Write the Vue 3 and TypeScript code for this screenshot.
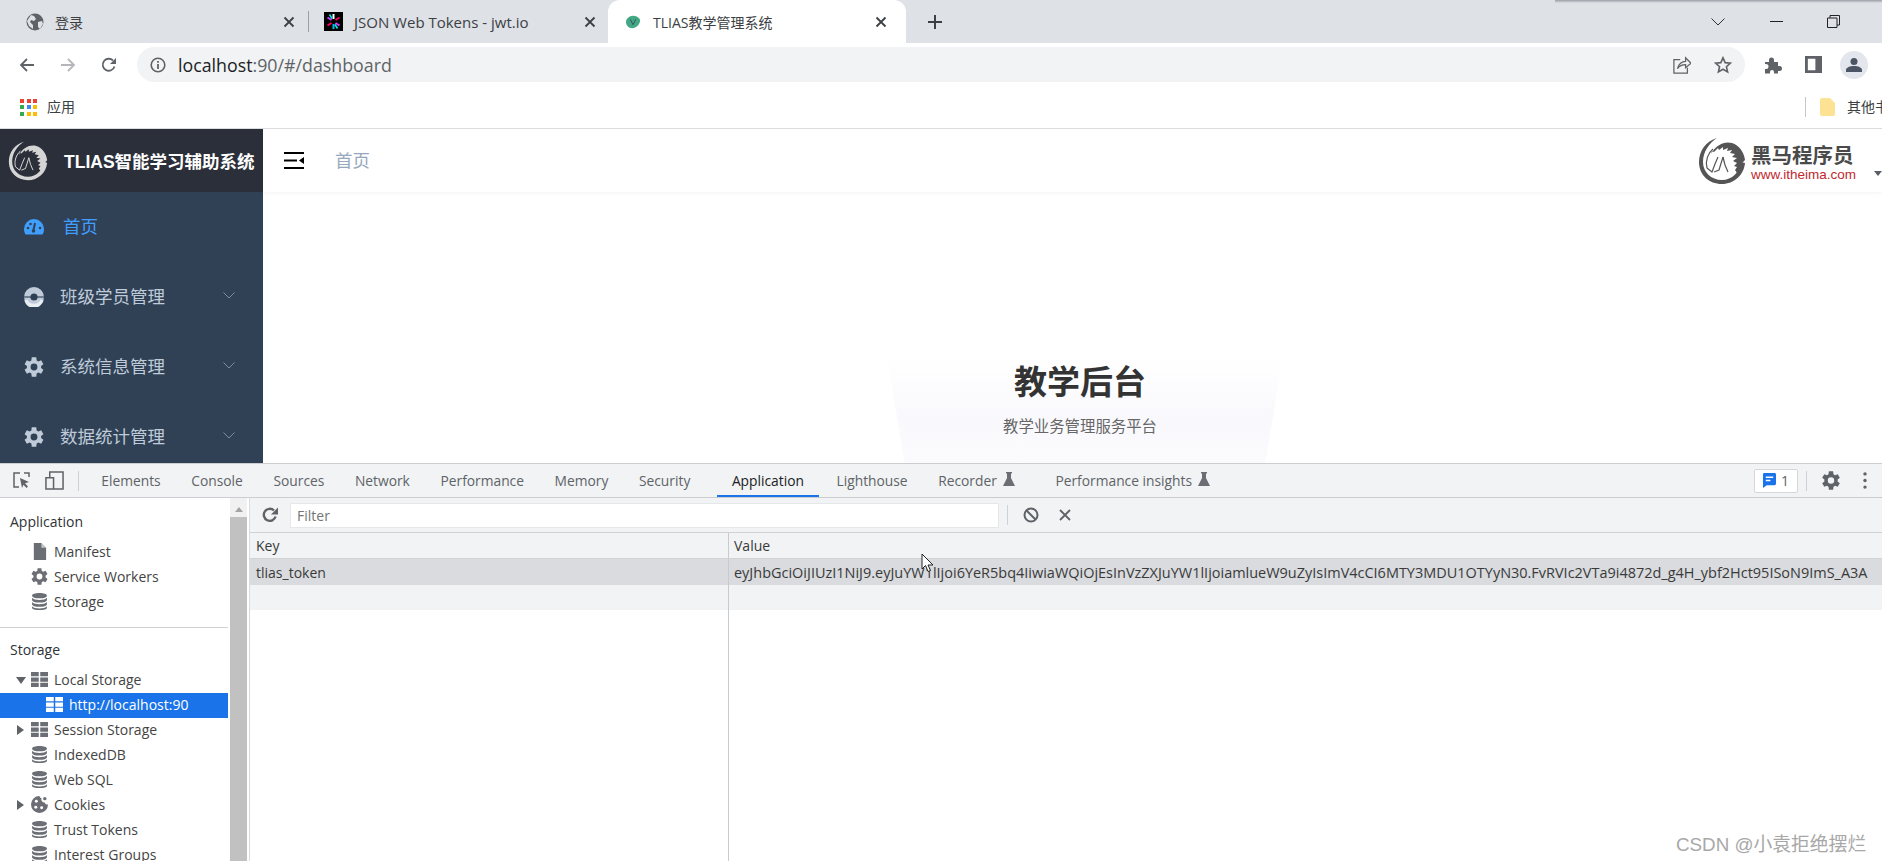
<template>
  <div class="screen">
    <svg class="sprites" aria-hidden="true">
      <symbol id="horse" viewBox="0 0 48 48">
        <path d="M19 1C8 4 1 14 1 25c0 13 10 22 23 22 12 0 22-9 23-21l-4-1c-1 10-9 18-19 18C13 43 5 35 5 25 5 15 11 6 19 1z" fill="currentColor" />
        <path d="M13 17C18 8 26 4 34 6c7 2 12 9 13 17l-3 3-1 6-4 4-2-3 2-3-3-1 3-3-4-2 4-3-5-1 3-3-5-1 2-3-5 1 1-3-5 2v-3l-4 3-1-2-4 4-2-1z" fill="currentColor" />
        <path d="M9 31c-2-7 1-15 6-19M9 31l5 4 3-8 3-7M25 20l-4 13-5 2M25 20l2 8 3 7" fill="none" stroke="currentColor" stroke-width="1.2" />
      </symbol>
      <symbol id="db" viewBox="0 0 16 16">
        <path d="M8 0c4 0 7 1 7 2.500S12 5 8 5 1 4 1 2.500 4 0 8 0zM1 4.500C2 6 5 6.500 8 6.500s6-.5 7-2v2C15 8 12 9 8 9S1 8 1 6.500zM1 8.500C2 10 5 10.500 8 10.500s6-.5 7-2v2c0 1.500-3 2.500-7 2.500s-7-1-7-2.500zM1 12.500c1 1.500 4 2 7 2s6-.5 7-2V14c0 1-3 2-7 2s-7-1-7-2z" fill="currentColor" />
      </symbol>
      <symbol id="grid" viewBox="0 0 16 14">
        <path d="M0 0h7.300v4H0zM8.700 0H16v4H8.700zM0 5h7.300v4H0zM8.700 5H16v4H8.700zM0 10h7.300v4H0zM8.700 10H16v4H8.700z" fill="currentColor" />
      </symbol>
      <symbol id="gear" viewBox="2.400 1.800 19.600 20.400">
        <path d="M19.400 13a7.500 7.500 0 0 0 0-2l2.400-1.900-2.300-4-2.900 1.200a7.500 7.500 0 0 0-1.700-1L14.500 2h-4.600l-.4 3.300a7.500 7.500 0 0 0-1.700 1L4.900 5.100l-2.300 4L5 11a7.500 7.500 0 0 0 0 2l-2.400 1.900 2.300 4 2.900-1.200c.5.400 1.100.7 1.700 1l.4 3.300h4.600l.4-3.300c.6-.3 1.200-.6 1.700-1l2.900 1.200 2.300-4zM12.200 15.500a3.500 3.500 0 1 1 0-7 3.500 3.500 0 0 1 0 7z" fill="currentColor" />
      </symbol>
      <symbol id="flask" viewBox="0 0 12 14">
        <path d="M3 0h6v1.500H8V6l4 8H0l4-8V1.500H3z" fill="currentColor" />
      </symbol>
    </svg>

    <div class="window-shadow"></div>

    <div class="tabstrip">
      <div v-for="tab in browserTabs" :key="tab.title" :class="['tab', `tab--${tab.id}`]">
        <svg v-if="tab.id === 'login'" class="tab__icon" viewBox="0 0 18 18">
          <circle cx="9" cy="9" r="8.500" fill="#5f6368" />
          <path d="M5 2l3 1 2 3-2 2-3-1-1 2 3 3v4l-4-3-2-5zM12 9l4-1 1 3-3 5-2-2z" fill="#dee1e6" />
        </svg>
        <svg v-else-if="tab.id === 'jwt'" class="tab__icon tab__icon--jwt" viewBox="0 0 19 19">
          <rect width="19" height="19" fill="#000" />
          <path d="M9.500 2v5" stroke="#fff" stroke-width="2" />
          <path d="M9.500 12v5" stroke="#00b9f1" stroke-width="2" />
          <path d="M3.500 5.500l4 2.500M11.500 11l4 2.500" stroke="#d63aff" stroke-width="2" />
          <path d="M15.500 5.500l-4 2.500M7.500 11l-4 2.500" stroke="#fb015b" stroke-width="2" />
          <path d="M5.500 2.500l2.500 4M11 12.500l2.500 4" stroke="#00f2e6" stroke-width="1.500" />
        </svg>
        <svg v-else class="tab__icon tab__icon--vue" viewBox="0 0 20 18">
          <path d="M10 1c6 0 10 4 9 7.500C18 13 14 17 9 17 4 17 1 13 1 9s4-8 9-8z" fill="#42a884" />
          <path d="M6.500 5.500L10 12.500l3.500-7" fill="none" stroke="#35495e" stroke-width="1.100" />
        </svg>
        <span class="tab__title">{{ tab.title }}</span>
        <svg class="tab__close" viewBox="0 0 12 12"><path d="M1.500 1.500l9 9M10.500 1.500l-9 9" stroke="#3c4043" stroke-width="1.800" /></svg>
      </div>
      <svg class="tab-add" viewBox="0 0 16 16"><path d="M8 1v14M1 8h14" stroke="#3c4043" stroke-width="2" /></svg>
      <div class="window-ctrls">
        <svg class="win-chevron" viewBox="0 0 14 8"><path d="M.5.500L7 7 13.500.500" fill="none" stroke="#333" /></svg>
        <span class="win-min"></span>
        <svg class="win-restore" viewBox="0 0 13 13"><path d="M.5 3h9.500v9.500H.5zM3 3V.5h9.500V10H10" fill="none" stroke="#222" /></svg>
      </div>
    </div>

    <div class="toolbar">
      <svg class="nav-icon" viewBox="0 0 16 16"><path d="M15 8H2M8 2L2 8l6 6" fill="none" stroke="#5f6368" stroke-width="1.800" /></svg>
      <svg class="nav-icon nav-icon--off" viewBox="0 0 16 16"><path d="M1 8h13M8 2l6 6-6 6" fill="none" stroke="#b4b6b9" stroke-width="1.800" /></svg>
      <svg class="nav-icon" viewBox="0 0 16 16"><path d="M13.500 9.500A6 6 0 1 1 12 3.500" fill="none" stroke="#5f6368" stroke-width="1.800" /><path d="M15 1v6H9z" fill="#5f6368" /></svg>
      <div class="omnibox">
        <svg class="omnibox__info" viewBox="0 0 16 16">
          <circle cx="8" cy="8" r="6.800" fill="none" stroke="#5f6368" stroke-width="1.600" />
          <path d="M8 7v5M8 4v1.800" stroke="#5f6368" stroke-width="1.800" />
        </svg>
        <span class="omnibox__url"><b>localhost</b>:90/#/dashboard</span>
        <svg class="omnibox__share" viewBox="0 0 20 20"><path d="M8 4H1v15h15v-6M5 14c1-5 5-8 9-8V2l6 6-6 5V9.500c-4 0-7 1.500-9 4.500z" fill="none" stroke="#5f6368" stroke-width="1.400" /></svg>
        <svg class="omnibox__star" viewBox="0 0 20 20"><path d="M10 2l2.400 5.400 5.800.6-4.400 3.900 1.300 5.800-5.100-3-5.100 3 1.300-5.800L1.800 8l5.800-.6z" fill="none" stroke="#5f6368" stroke-width="1.800" /></svg>
      </div>
      <svg class="ext-icon" viewBox="0 0 18 18"><path d="M1 6h4V4a2.500 2.500 0 0 1 5 0v2h4v4h1.500a2.500 2.500 0 0 1 0 5H14v2.500H10V16a2 2 0 0 0-4 0v1.500H1V13h1a2.500 2.500 0 0 0 0-5H1z" fill="#5f6368" /></svg>
      <svg class="panel-icon" viewBox="0 0 18 18"><path d="M0 0h18v18H0zM3 3v12h8V3z" fill="#5f6368" fill-rule="evenodd" /></svg>
      <div class="avatar">
        <svg viewBox="0 0 16 16"><circle cx="8" cy="4.500" r="3.500" fill="#4b5563" /><path d="M0 15v-2c0-2.500 4-4 8-4s8 1.500 8 4v2z" fill="#4b5563" /></svg>
      </div>
    </div>

    <div class="bookmarks">
      <div class="apps-grid">
        <i v-for="(color, i) in appColors" :key="i" :style="{ background: color }"></i>
      </div>
      <span class="bookmarks__label">应用</span>
      <span class="bookmarks__sep"></span>
      <svg class="bookmarks__folder" viewBox="0 0 15 18"><path d="M2 0h8l5 5v11a2 2 0 0 1-2 2H2a2 2 0 0 1-2-2V2a2 2 0 0 1 2-2z" fill="#fde293" /></svg>
      <span class="bookmarks__label bookmarks__label--other">其他书签</span>
    </div>

    <div class="page">
      <aside class="side">
        <div class="side__brand">
          <svg class="side__logo"><use href="#horse" /></svg>
          <span class="side__title">TLIAS智能学习辅助系统</span>
        </div>
        <div v-for="item in menu" :key="item.label" :class="['menu-item', { 'menu-item--active': item.active }]">
          <svg v-if="item.icon === 'dash'" class="menu-item__icon" viewBox="0 0 20 16">
            <path d="M10 0a10 10 0 0 1 10 10c0 2-.5 4-1.500 5.500h-17A10 10 0 0 1 0 10 10 10 0 0 1 10 0z" fill="currentColor" />
            <path d="M11 4l-1.500 7" stroke="#304156" stroke-width="2" />
            <circle cx="4" cy="9" r="1.300" fill="#304156" /><circle cx="6.500" cy="5" r="1.300" fill="#304156" /><circle cx="16" cy="9" r="1.300" fill="#304156" /><circle cx="9.500" cy="12" r="1.800" fill="#304156" />
          </svg>
          <svg v-else-if="item.icon === 'ring'" class="menu-item__icon" viewBox="0 0 20 20">
            <circle cx="10" cy="10" r="6.800" fill="none" stroke="currentColor" stroke-width="6.400" />
            <path d="M3.400 12.500a7.200 7.200 0 0 0 13.200 0l3 1.100a10 10 0 0 1-19.200 0z" fill="#e8edf3" />
            <path d="M0 10h20" stroke="#304156" stroke-width="1.100" />
          </svg>
          <svg v-else class="menu-item__icon"><use href="#gear" /></svg>
          <span class="menu-item__label">{{ item.label }}</span>
          <svg v-if="item.icon !== 'dash'" class="menu-item__arrow" viewBox="0 0 12 7"><path d="M.5.500L6 6 11.500.500" fill="none" stroke="currentColor" /></svg>
        </div>
      </aside>

      <main class="content">
        <header class="navbar">
          <svg class="navbar__toggle" viewBox="0 0 20 17">
            <path d="M0 0h20v2H0zM0 7.500h13v2H0zM0 15h20v2H0z" fill="#000" />
            <path d="M20 5v7l-5-3.500z" fill="#000" />
          </svg>
          <span class="navbar__crumb">首页</span>
          <div class="brand">
            <svg class="brand__logo"><use href="#horse" /></svg>
            <div class="brand__text">
              <span class="brand__name">黑马程序员</span>
              <span class="brand__site">www.itheima.com</span>
            </div>
          </div>
          <span class="navbar__caret"></span>
        </header>
        <section class="hero">
          <div class="hero__backdrop"></div>
          <h1 class="hero__title">教学后台</h1>
          <p class="hero__sub">教学业务管理服务平台</p>
        </section>
      </main>
    </div>

    <div class="devtools">
      <div class="dt-tabs">
        <svg class="dt-tool" viewBox="0 0 17 17">
          <path d="M7 1H1v14h5M11 1h5v4" fill="none" stroke="#5f6368" stroke-width="1.500" />
          <path d="M7 6l9 4-4 1.200 3 3.300-1.500 1.500-3-3.300L9 16z" fill="#5f6368" />
        </svg>
        <svg class="dt-tool dt-tool--device" viewBox="0 0 20 20">
          <path d="M5 7V1h14v18H1V7h8v12" fill="none" stroke="#5f6368" stroke-width="1.600" />
        </svg>
        <span class="dt-tabs__sep"></span>
        <div
          v-for="tab in devTabs"
          :key="tab.label"
          :class="['dt-tab', { 'dt-tab--active': tab.label === 'Application' }]"
        >
          {{ tab.label }}
          <svg v-if="tab.flask" class="dt-tab__flask"><use href="#flask" /></svg>
        </div>
        <div class="dt-tabs__right">
          <div class="issues">
            <svg viewBox="0 0 14 16">
              <path d="M1.500 0h11A1.500 1.500 0 0 1 14 1.500v10a1.500 1.500 0 0 1-1.500 1.500H4l-4 3V1.500A1.500 1.500 0 0 1 1.500 0z" fill="#1a73e8" />
              <path d="M3 4.500h8M3 8h5" stroke="#fff" stroke-width="1.400" />
            </svg>
            <span>1</span>
          </div>
          <span class="dt-tabs__sep dt-tabs__sep--issues"></span>
          <svg class="dt-gear"><use href="#gear" /></svg>
          <svg class="dt-more" viewBox="0 0 4 18"><circle cx="2" cy="2" r="1.800" fill="#5f6368" /><circle cx="2" cy="9" r="1.800" fill="#5f6368" /><circle cx="2" cy="16" r="1.800" fill="#5f6368" /></svg>
        </div>
      </div>

      <div class="dt-body">
        <nav class="tree">
          <div class="tree__heading tree__heading--first">Application</div>
          <div v-for="node in appNodes" :key="node.label" class="tree__row">
            <svg v-if="node.icon === 'file'" class="tree__icon" viewBox="0 0 16 18"><path d="M2 0h8l5 5v13H2z" fill="#6b6f75" /><path d="M10 0v5h5" fill="#fff" opacity=".6" /></svg>
            <svg v-else class="tree__icon"><use :href="`#${node.icon}`" /></svg>
            {{ node.label }}
          </div>
          <div class="tree__divider"></div>
          <div class="tree__heading">Storage</div>
          <div
            v-for="node in storageNodes"
            :key="node.label"
            :class="['tree__row', { 'tree__row--child': node.child, 'tree__row--selected': node.selected }]"
          >
            <span v-if="node.caret" :class="['tree__caret', `tree__caret--${node.caret}`]"></span>
            <svg v-if="node.icon === 'cookie'" class="tree__icon" viewBox="0 0 16 16">
              <path d="M8 0a8 8 0 1 0 8 8c-2 0-3-1-3-2-2 0-4-2-3-4-1 0-2-1-2-2z" fill="#6b6f75" />
              <circle cx="5" cy="5" r="1.400" fill="#fff" /><circle cx="4.500" cy="10.500" r="1.400" fill="#fff" /><circle cx="10" cy="11" r="1.400" fill="#fff" />
              <circle cx="13" cy="2.500" r="1.600" fill="#6b6f75" />
            </svg>
            <svg v-else class="tree__icon"><use :href="`#${node.icon}`" /></svg>
            {{ node.label }}
          </div>
        </nav>

        <div class="scrollbar">
          <span class="scrollbar__up"></span>
          <span class="scrollbar__thumb"></span>
        </div>

        <div class="storage">
          <div class="filter">
            <svg class="filter__reload" viewBox="0 0 16 16"><path d="M13.600 9.500A6 6 0 1 1 12 3.500" fill="none" stroke="#5f6368" stroke-width="2.400" /><path d="M16 .5v7H9z" fill="#5f6368" /></svg>
            <div class="filter__input">Filter</div>
            <span class="filter__sep"></span>
            <svg class="filter__block" viewBox="0 0 16 16"><circle cx="8" cy="8" r="6.500" fill="none" stroke="#5f6368" stroke-width="2" /><path d="M3.500 3.500l9 9" stroke="#5f6368" stroke-width="2" /></svg>
            <svg class="filter__clear" viewBox="0 0 12 12"><path d="M1 1l10 10M11 1L1 11" stroke="#5f6368" stroke-width="1.800" /></svg>
          </div>
          <div class="kv">
            <div class="kv__row kv__row--head">
              <div class="kv__key">Key</div>
              <div class="kv__val">Value</div>
            </div>
            <div class="kv__row kv__row--selected">
              <div class="kv__key">tlias_token</div>
              <div class="kv__val">{{ token }}</div>
            </div>
            <div class="kv__row kv__row--blank">
              <div class="kv__key"></div>
              <div class="kv__val"></div>
            </div>
            <div class="kv__fill"></div>
          </div>
        </div>
      </div>
    </div>

    <svg class="cursor" viewBox="0 0 13 20"><path d="M1 1v15l3.500-3.500L7 18.500l2.500-1-2.500-5.500h5z" fill="#fff" stroke="#222" /></svg>
    <div class="watermark">CSDN @小袁拒绝摆烂</div>
  </div>
</template>

<script setup lang="ts">
interface DevTab {
  label: string
  flask?: boolean
}

interface TreeNode {
  label: string
  icon: string
  caret?: 'open' | 'closed'
  child?: boolean
  selected?: boolean
}

const browserTabs = [
  { id: 'login', title: '登录' },
  { id: 'jwt', title: 'JSON Web Tokens - jwt.io' },
  { id: 'tlias', title: 'TLIAS教学管理系统' }
]

const appColors = [
  '#ea4335', '#ea4335', '#ea4335',
  '#34a853', '#4285f4', '#fbbc04',
  '#34a853', '#fbbc04', '#fbbc04'
]

const menu = [
  { label: '首页', icon: 'dash', active: true },
  { label: '班级学员管理', icon: 'ring' },
  { label: '系统信息管理', icon: 'gear' },
  { label: '数据统计管理', icon: 'gear' }
]

const devTabs: DevTab[] = [
  { label: 'Elements' },
  { label: 'Console' },
  { label: 'Sources' },
  { label: 'Network' },
  { label: 'Performance' },
  { label: 'Memory' },
  { label: 'Security' },
  { label: 'Application' },
  { label: 'Lighthouse' },
  { label: 'Recorder', flask: true },
  { label: 'Performance insights', flask: true }
]

const appNodes: TreeNode[] = [
  { label: 'Manifest', icon: 'file' },
  { label: 'Service Workers', icon: 'gear' },
  { label: 'Storage', icon: 'db' }
]

const storageNodes: TreeNode[] = [
  { label: 'Local Storage', icon: 'grid', caret: 'open' },
  { label: 'http://localhost:90', icon: 'grid', child: true, selected: true },
  { label: 'Session Storage', icon: 'grid', caret: 'closed' },
  { label: 'IndexedDB', icon: 'db' },
  { label: 'Web SQL', icon: 'db' },
  { label: 'Cookies', icon: 'cookie', caret: 'closed' },
  { label: 'Trust Tokens', icon: 'db' },
  { label: 'Interest Groups', icon: 'db' }
]

const token =
  'eyJhbGciOiJIUzI1NiJ9.eyJuYW1lIjoi6YeR5bq4IiwiaWQiOjEsInVzZXJuYW1lIjoiamlueW9uZyIsImV4cCI6MTY3MDU1OTYyN30.FvRVIc2VTa9i4872d_g4H_ybf2Hct95ISoN9ImS_A3A'
</script>

<style>
html,
body {
  margin: 0;
  background: #fff;
  overflow: hidden;
}
</style>

<style scoped>
.screen {
  position: relative;
  display: flex;
  flex-direction: column;
  width: 1882px;
  height: 861px;
  overflow: hidden;
  color: #333;
  font-family: "Open Sans", "Noto Sans CJK SC", sans-serif;
}

.sprites {
  position: absolute;
  width: 0;
  height: 0;
}

.window-shadow {
  position: absolute;
  top: 0;
  left: 1555px;
  right: 0;
  height: 3px;
  background: linear-gradient(#9a9ea5, #dee1e6);
}

/* browser chrome */
.tabstrip {
  display: flex;
  flex: none;
  align-items: center;
  height: 43px;
  background: #dee1e6;
}

.tab {
  position: relative;
  display: flex;
  flex: none;
  align-items: center;
  height: 43px;
  box-sizing: border-box;
  font-size: 14px;
  color: #3c4043;
}

.tab--login {
  width: 309px;
  padding: 0 14px 0 26px;
}

.tab--login::after {
  content: '';
  position: absolute;
  top: 11px;
  right: 0;
  width: 1px;
  height: 21px;
  background: #9aa0a6;
}

.tab--jwt {
  width: 299px;
  padding: 0 12px 0 15px;
  border-bottom-right-radius: 10px;
  font-size: 15px;
}

.tab--tlias {
  width: 298px;
  padding: 0 19px 0 17px;
  background: #fff;
  border-radius: 12px 12px 0 0;
}

.tab__icon {
  flex: none;
  width: 18px;
  height: 18px;
  margin-right: 11px;
}

.tab__icon--jwt {
  width: 19px;
  height: 19px;
}

.tab__icon--vue {
  width: 16px;
  height: 14px;
  margin-right: 12px;
}

.tab__title {
  flex: 1;
  white-space: nowrap;
}

.tab__close {
  flex: none;
  width: 12px;
  height: 12px;
}

.tab-add {
  flex: none;
  width: 16px;
  height: 16px;
  margin-left: 21px;
}

.window-ctrls {
  display: flex;
  align-items: center;
  margin-left: auto;
  padding-right: 42px;
  height: 37px;
}

.win-chevron {
  width: 14px;
  height: 8px;
  margin-right: 45px;
}

.win-min {
  width: 13px;
  height: 1px;
  margin-right: 44px;
  background: #222;
}

.win-restore {
  width: 13px;
  height: 13px;
}

.toolbar {
  display: flex;
  flex: none;
  align-items: center;
  height: 43px;
  padding: 0 15px 0 19px;
  box-sizing: border-box;
  background: #fff;
}

.nav-icon {
  flex: none;
  width: 16px;
  height: 16px;
  margin-right: 25px;
}

.nav-icon:nth-child(3) {
  margin-right: 20px;
}

.omnibox {
  display: flex;
  flex: none;
  align-items: center;
  width: 1608px;
  height: 35px;
  padding: 0 13px;
  box-sizing: border-box;
  border-radius: 18px;
  background: #f1f3f4;
}

.omnibox__info {
  flex: none;
  width: 16px;
  height: 16px;
  margin-right: 12px;
}

.omnibox__url {
  flex: 1;
  font-size: 17.800px;
  color: #5f6368;
}

.omnibox__url b {
  font-weight: 400;
  color: #202124;
}

.omnibox__share {
  width: 18px;
  height: 18px;
  margin-right: 23px;
}

.omnibox__star {
  width: 18px;
  height: 18px;
}

.ext-icon {
  flex: none;
  width: 18px;
  height: 18px;
  margin-left: 19px;
}

.panel-icon {
  flex: none;
  width: 17px;
  height: 17px;
  margin-left: 23px;
}

.avatar {
  display: flex;
  flex: none;
  align-items: center;
  justify-content: center;
  width: 28px;
  height: 28px;
  margin-left: 18px;
  border-radius: 50%;
  background: #e3e6ec;
}

.avatar svg {
  width: 16px;
  height: 16px;
}

.bookmarks {
  display: flex;
  flex: none;
  align-items: center;
  height: 43px;
  padding-left: 20px;
  box-sizing: border-box;
  background: #fff;
  border-bottom: 1px solid #dadce0;
  overflow: hidden;
}

.apps-grid {
  display: grid;
  grid-template-columns: repeat(3, 4px);
  grid-auto-rows: 4px;
  gap: 2.500px;
  flex: none;
}

.bookmarks__label {
  flex: none;
  margin-left: 10px;
  padding-bottom: 3px;
  font-size: 14px;
  color: #3c4043;
}

.bookmarks__sep {
  flex: none;
  width: 1px;
  height: 20px;
  margin-left: 1730px;
  background: #c4c7cc;
}

.bookmarks__folder {
  flex: none;
  width: 15px;
  height: 18px;
  margin-left: 14px;
}

.bookmarks__label--other {
  margin-left: 12px;
}

/* app page */
.page {
  display: flex;
  flex: none;
  height: 334px;
  overflow: hidden;
}

.side {
  flex: none;
  width: 263px;
  background: #304156;
  color: #bfcbd9;
}

.side__brand {
  display: flex;
  align-items: center;
  height: 63px;
  padding-left: 8px;
  background: #2b2f3a;
}

.side__logo {
  flex: none;
  width: 40px;
  height: 40px;
  color: #d5d5d5;
}

.side__title {
  margin-left: 16px;
  font-family: "Liberation Sans", "Noto Sans CJK SC", sans-serif;
  font-size: 17.500px;
  font-weight: 700;
  color: #fff;
  white-space: nowrap;
}

.menu-item {
  display: flex;
  align-items: center;
  height: 70px;
  padding-left: 24px;
  font-size: 17.500px;
}

.menu-item--active {
  color: #409eff;
}

.menu-item__icon {
  flex: none;
  width: 20px;
  height: 20px;
}

.menu-item__label {
  margin-left: 16px;
  line-height: 1;
}

.menu-item--active .menu-item__label {
  margin-left: 19px;
}

.menu-item__arrow {
  width: 12px;
  height: 7px;
  margin-left: 58px;
  margin-top: -4px;
  opacity: .55;
}

.content {
  flex: 1;
  display: flex;
  flex-direction: column;
  min-width: 0;
}

.navbar {
  display: flex;
  flex: none;
  align-items: center;
  height: 63px;
  padding-left: 21px;
  box-sizing: border-box;
  box-shadow: 0 1px 4px rgba(0, 21, 41, .05);
}

.navbar__toggle {
  flex: none;
  width: 20px;
  height: 17px;
}

.navbar__crumb {
  margin-left: 31px;
  padding-bottom: 2px;
  font-size: 17.500px;
  color: #97a8be;
}

.brand {
  display: flex;
  align-items: center;
  margin-left: auto;
}

.brand__logo {
  flex: none;
  width: 48px;
  height: 50px;
  color: #555;
}

.brand__text {
  display: flex;
  flex-direction: column;
  align-items: flex-start;
  margin: 2px 0 0 5px;
}

.brand__name {
  font-size: 20.500px;
  line-height: 27px;
  font-weight: 700;
  color: #4a4a4a;
  font-family: "Noto Sans CJK SC", sans-serif;
}

.brand__site {
  font-family: "Liberation Sans", sans-serif;
  font-size: 13.500px;
  line-height: 14px;
  color: #c1272d;
}

.navbar__caret {
  flex: none;
  width: 0;
  height: 0;
  margin: 26px 0 0 18px;
  border: 4px solid transparent;
  border-top: 5px solid #5a5e66;
  border-bottom: 0;
}

.hero {
  position: relative;
  display: flex;
  flex: 1;
  flex-direction: column;
  align-items: center;
  padding: 166px 0 0 15px;
  box-sizing: border-box;
}

.hero__backdrop {
  position: absolute;
  top: 120px;
  left: 617px;
  width: 410px;
  height: 151px;
  clip-path: polygon(0 0, 100% 0, 94% 100%, 6% 100%);
  background: linear-gradient(#fff 30%, #f9f9fd 70%, #fbfbfe);
}

.hero__title {
  position: relative;
  margin: 0;
  font-size: 33px;
  line-height: 44px;
  font-weight: 700;
  color: #333;
  font-family: "Noto Sans CJK SC", sans-serif;
}

.hero__sub {
  position: relative;
  margin: 14px 0 0;
  font-size: 15.400px;
  line-height: 22px;
  color: #666;
}

/* devtools */
.devtools {
  display: flex;
  flex: 1;
  flex-direction: column;
  min-height: 0;
  background: #fff;
  border-top: 1px solid #cbcdd1;
  color: #3a3a3a;
  font-family: "Open Sans", sans-serif;
  font-size: 14px;
}

.dt-tabs {
  display: flex;
  flex: none;
  align-items: center;
  height: 34px;
  padding-left: 13px;
  box-sizing: border-box;
  background: #f1f3f4;
  border-bottom: 1px solid #cbcdd1;
}

.dt-tool {
  flex: none;
  width: 17px;
  height: 17px;
}

.dt-tool--device {
  width: 19px;
  height: 19px;
  margin-left: 15px;
}

.dt-tabs__sep {
  flex: none;
  width: 1px;
  height: 20px;
  margin: 0 7px 0 14px;
  background: #cfd1d5;
}

.dt-tab {
  display: flex;
  align-items: center;
  height: 33px;
  padding: 0 15.300px;
  box-sizing: border-box;
  font-size: 13.800px;
  color: #5f6368;
  white-space: nowrap;
}

.dt-tab--active {
  margin: 0 2px 0 11px;
  color: #202124;
  border-bottom: 2px solid #1a73e8;
  padding-top: 2px;
}

.dt-tab__flask {
  width: 12px;
  height: 14px;
  margin: -4px 10px 0 6px;
  color: #6b6f75;
}

.dt-tabs__right {
  display: flex;
  align-items: center;
  margin-left: auto;
  padding-right: 15px;
}

.issues {
  display: flex;
  align-items: center;
  justify-content: center;
  gap: 5px;
  width: 44px;
  height: 24px;
  box-sizing: border-box;
  border: 1px solid #d5d7da;
  border-radius: 2px;
  background: #fff;
  color: #5f6368;
}

.issues svg {
  width: 13px;
  height: 15px;
}

.dt-tabs__sep--issues {
  margin: 0 0 0 8px;
}

.dt-gear {
  width: 18px;
  height: 19px;
  margin-left: 15px;
  color: #5f6368;
}

.dt-more {
  width: 4px;
  height: 17px;
  margin-left: 23px;
}

.dt-body {
  display: flex;
  flex: 1;
  min-height: 0;
}

.tree {
  flex: none;
  width: 228px;
  overflow: hidden;
  background: #fff;
}

.tree__heading {
  height: 26px;
  margin: 10px 0 4px;
  padding-left: 10px;
  line-height: 23px;
  color: #303336;
}

.tree__heading--first {
  margin-top: 12px;
}

.tree__divider {
  height: 1px;
  margin-top: 12px;
  background: #d0d2d5;
}

.tree__row {
  position: relative;
  display: flex;
  flex: none;
  align-items: center;
  height: 25px;
  padding: 0 0 2px 31px;
  box-sizing: border-box;
  color: #444;
  white-space: nowrap;
}

.tree__row--child {
  padding-left: 46px;
}

.tree__row--selected {
  background: #1a73e8;
  color: #fff;
}

.tree__icon {
  flex: none;
  width: 17px;
  height: 17px;
  margin-right: 6px;
  color: #6b6f75;
}

.tree__row--selected .tree__icon {
  color: #fff;
}

.tree__caret {
  position: absolute;
  left: 16px;
  top: 8px;
  width: 0;
  height: 0;
  border: 5px solid transparent;
}

.tree__caret--open {
  top: 9px;
  border-top: 7px solid #5f6368;
  border-bottom: 0;
}

.tree__caret--closed {
  left: 17px;
  top: 7px;
  border-left: 7px solid #5f6368;
  border-right: 0;
}

.scrollbar {
  display: flex;
  flex: none;
  flex-direction: column;
  align-items: center;
  width: 17px;
  margin-left: 2px;
  background: #f1f1f1;
}

.scrollbar__up {
  flex: none;
  width: 0;
  height: 0;
  margin: 9px 0 5px;
  border: 4px solid transparent;
  border-bottom: 5px solid #a3a3a3;
  border-top: 0;
}

.scrollbar__thumb {
  flex: 1;
  width: 100%;
  background: #c1c1c1;
}

.storage {
  display: flex;
  flex: 1;
  flex-direction: column;
  min-width: 0;
  margin-left: 2px;
  border-left: 1px solid #d9dbde;
}

.filter {
  display: flex;
  flex: none;
  align-items: center;
  height: 35px;
  padding-left: 12px;
  box-sizing: border-box;
  background: #f1f3f4;
  border-bottom: 1px solid #d0d2d5;
}

.filter__reload {
  flex: none;
  width: 16px;
  height: 16px;
}

.filter__input {
  flex: none;
  width: 709px;
  height: 25px;
  margin-left: 12px;
  padding-left: 6px;
  box-sizing: border-box;
  background: #fff;
  border: 1px solid #e6e7e9;
  line-height: 23px;
  color: #757575;
}

.filter__sep {
  flex: none;
  width: 1px;
  height: 20px;
  margin-left: 8px;
  background: #cfd1d5;
}

.filter__block {
  flex: none;
  width: 16px;
  height: 16px;
  margin-left: 15px;
}

.filter__clear {
  flex: none;
  width: 12px;
  height: 12px;
  margin-left: 20px;
}

.kv {
  display: flex;
  flex: 1;
  flex-direction: column;
  min-height: 0;
}

.kv__row {
  display: flex;
  flex: none;
  height: 26px;
  box-sizing: border-box;
  line-height: 25px;
  background: #f1f3f4;
}

.kv__row--head {
  border-bottom: 1px solid #d0d2d5;
}

.kv__row--selected {
  background: #d9dbde;
  line-height: 27px;
}

.kv__row--blank {
  height: 25px;
}

.kv__key {
  flex: none;
  width: 478px;
  padding-left: 6px;
  box-sizing: border-box;
}

.kv__val {
  flex: 1;
  min-width: 0;
  padding-left: 5px;
  border-left: 1px solid #c8cacd;
  white-space: nowrap;
  overflow: hidden;
}

.kv__row--selected .kv__val {
  font-size: 14.470px;
}

.kv__fill {
  flex: 1;
  margin-left: 478px;
  border-left: 1px solid #c8cacd;
}

/* overlays */
.cursor {
  position: absolute;
  left: 921px;
  top: 553px;
  width: 13px;
  height: 20px;
}

.watermark {
  position: absolute;
  left: 1676px;
  top: 829px;
  font-family: "Liberation Sans", "Noto Sans CJK SC", sans-serif;
  font-size: 18.800px;
  color: #a8a8a8;
  white-space: nowrap;
}
</style>
